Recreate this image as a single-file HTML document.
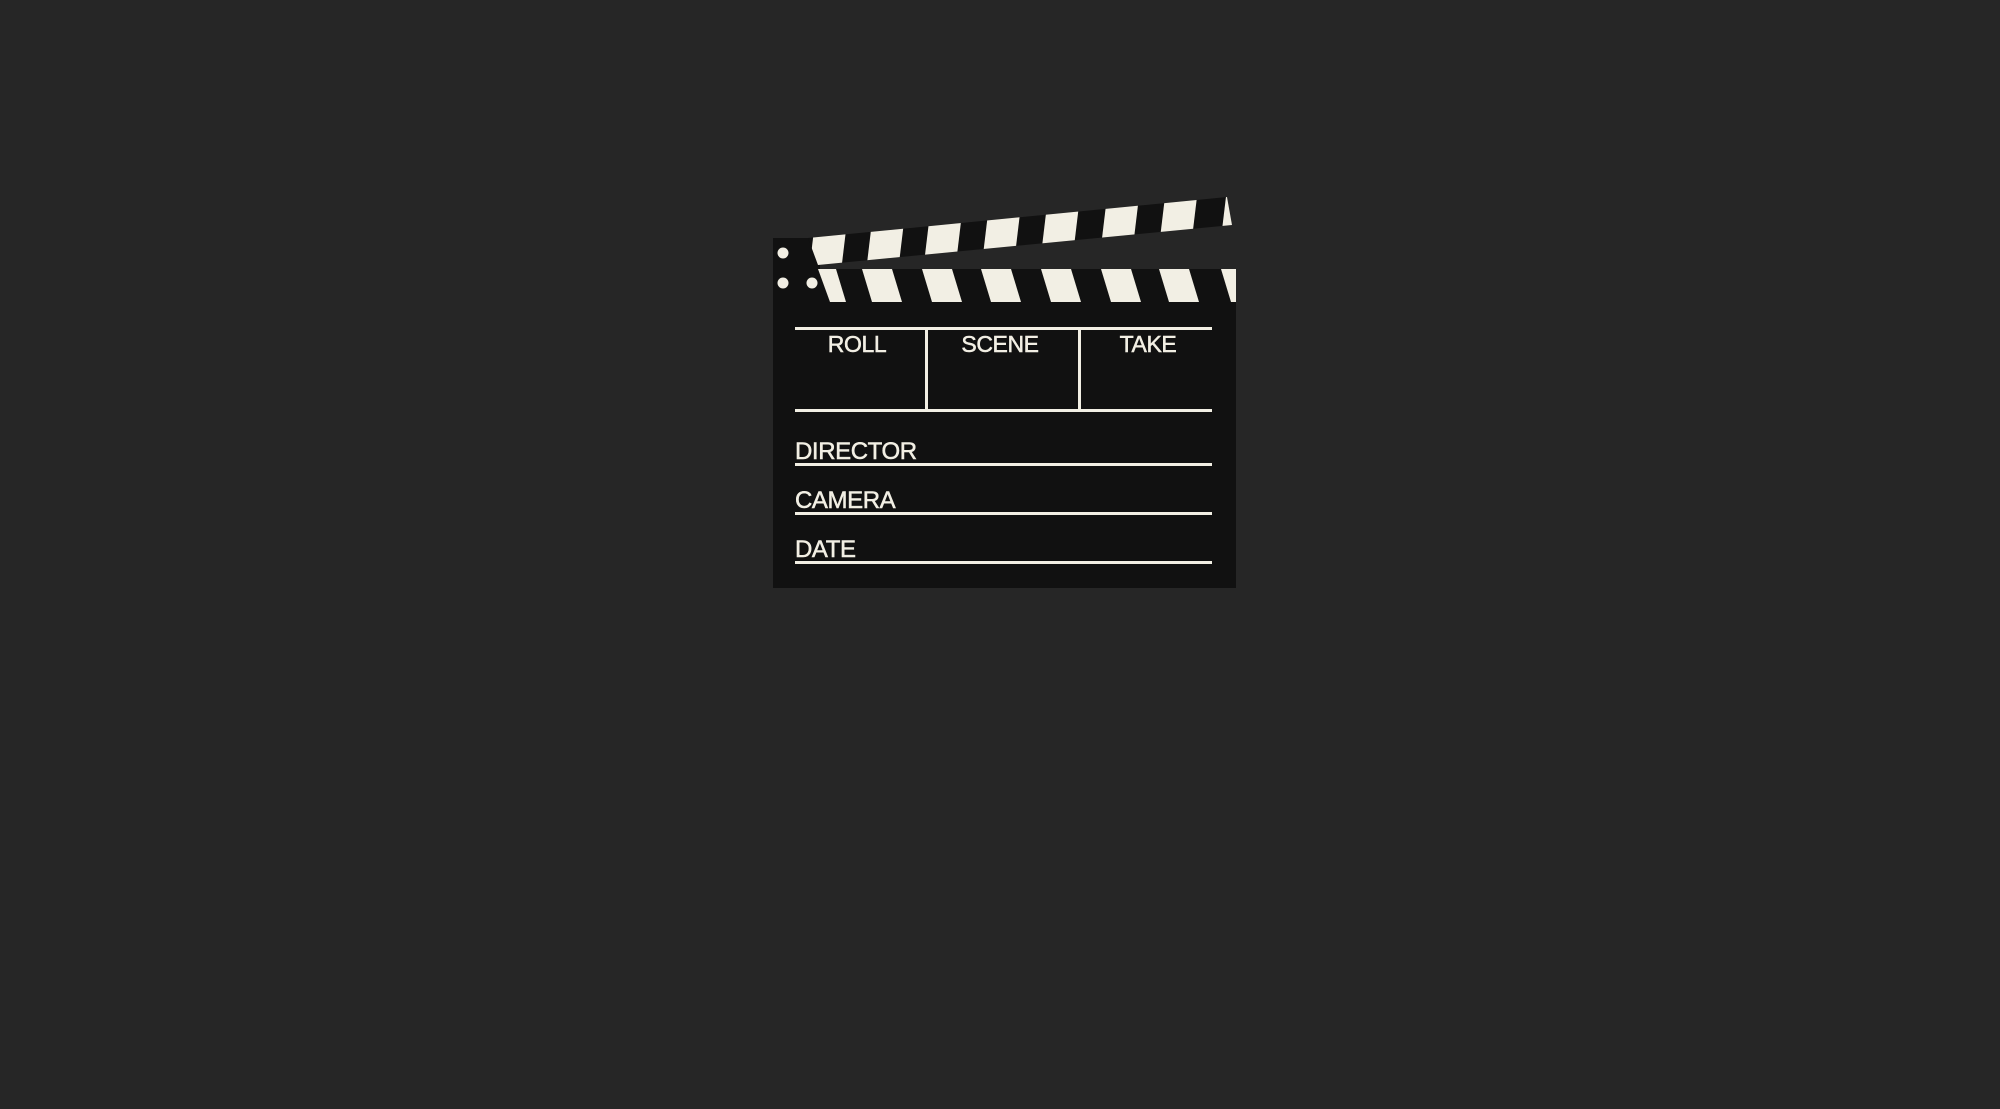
<!DOCTYPE html>
<html><head><meta charset="utf-8"><style>
html,body{margin:0;padding:0;background:#262626;width:2000px;height:1109px;overflow:hidden}
svg{position:absolute;left:0;top:0}
text{font-family:"Liberation Sans",Arial,sans-serif;fill:#f2efe4;stroke:#f2efe4;stroke-width:0.5;letter-spacing:-0.4px}
</style></head><body>
<svg width="2000" height="1109" viewBox="0 0 2000 1109">
<defs>
<clipPath id="up"><polygon points="808,238 1227,197 1232,225 818,265"/></clipPath>
<clipPath id="lo"><polygon points="818,269 1236,269 1236,302 830,302"/></clipPath>
</defs>
<rect x="773" y="269" width="463" height="319" fill="#111"/>
<rect x="773" y="238" width="47" height="64" fill="#111"/>
<polygon points="808,238 1227,197 1232,225 818,265" fill="#111"/>
<g clip-path="url(#up)" fill="#f2efe4">
<polygon points="808,280 840,280 852,180 820,180"/>
<polygon points="865,280 897,280 909,180 877,180"/>
<polygon points="922,280 954,280 966,180 934,180"/>
<polygon points="980,280 1012,280 1024,180 992,180"/>
<polygon points="1038,280 1070,280 1082,180 1050,180"/>
<polygon points="1097,280 1129,280 1141,180 1109,180"/>
<polygon points="1155,280 1187,280 1199,180 1167,180"/>
<polygon points="1216,280 1248,280 1260,180 1228,180"/>
</g>
<g clip-path="url(#lo)" fill="#f2efe4">
<rect x="818" y="269" width="418" height="33" fill="#111"/>
<polygon points="806,269 836,269 846,302 816,302"/>
<polygon points="862,269 892,269 902,302 872,302"/>
<polygon points="922,269 952,269 962,302 932,302"/>
<polygon points="981,269 1011,269 1021,302 991,302"/>
<polygon points="1041,269 1071,269 1081,302 1051,302"/>
<polygon points="1101,269 1131,269 1141,302 1111,302"/>
<polygon points="1159,269 1189,269 1199,302 1169,302"/>
<polygon points="1221,269 1251,269 1261,302 1231,302"/>
</g>
<g fill="#f2efe4">
<circle cx="783" cy="253" r="5.5"/>
<circle cx="783" cy="283" r="5.5"/>
<circle cx="812" cy="283" r="5.5"/>
<rect x="795" y="327" width="417" height="3"/>
<rect x="795" y="409" width="417" height="3"/>
<rect x="925" y="327" width="3" height="85"/>
<rect x="1078" y="327" width="3" height="85"/>
<rect x="795" y="463" width="417" height="3"/>
<rect x="795" y="512" width="417" height="3"/>
<rect x="795" y="561" width="417" height="3"/>
</g>
<text x="857" y="352" font-size="23" text-anchor="middle">ROLL</text>
<text x="1000" y="352" font-size="23" text-anchor="middle">SCENE</text>
<text x="1148" y="352" font-size="23" text-anchor="middle">TAKE</text>
<text x="795" y="459" font-size="24">DIRECTOR</text>
<text x="795" y="508" font-size="24">CAMERA</text>
<text x="795" y="557" font-size="24">DATE</text>
</svg>
</body></html>
